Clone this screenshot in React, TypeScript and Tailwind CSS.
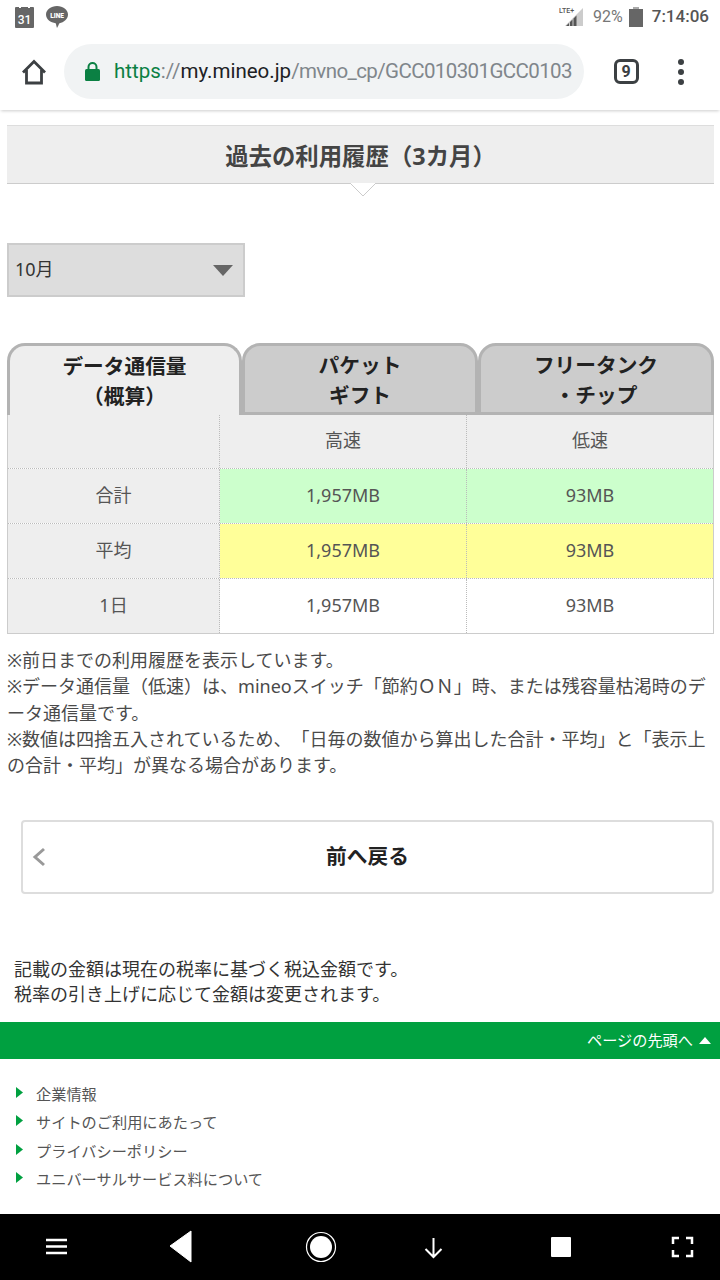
import React from 'react'

const JP = "font-['Noto_Sans','Noto_Sans_CJK_JP',sans-serif] [text-spacing-trim:space-all]";

const ROWS = [
    { label: "合計", high: "1,957MB", low: "93MB", bg: "bg-[#ccffcc]" },
    { label: "平均", high: "1,957MB", low: "93MB", bg: "bg-[#ffff99]" },
    { label: "1日", high: "1,957MB", low: "93MB", bg: "bg-white" },
];

const FOOTER_LINKS = ["企業情報", "サイトのご利用にあたって", "プライバシーポリシー", "ユニバーサルサービス料について"];

const StatusBar = () => (
    <div className="h-[34px] flex items-center justify-between pl-[15px] pr-[11px] bg-white">
        <div className="flex items-center gap-[12px]">
            {/* calendar */}
            <svg width="19" height="22" viewBox="0 0 19 22">
                <path d="M1 1h3v1h2V1h7v1h2V1h3a1 1 0 0 1 1 1v19a1 1 0 0 1-1 1H1a1 1 0 0 1-1-1V2a1 1 0 0 1 1-1z" fill="#666" />
                <text x="9.5" y="18" textAnchor="middle" fontSize="12" fontWeight="500" fill="#fff" fontFamily="Roboto">31</text>
            </svg>
            {/* line bubble */}
            <svg width="22" height="22" viewBox="0 0 22 22">
                <path d="M11 0c6 0 11 3.600 11 8.600 0 4.600-4.200 8-8.500 8.600-.6.6-1.600 3.500-2.500 4.800-.6-1.400-.8-3.800-1.300-4.800C4.600 16.800 0 13.200 0 8.600 0 3.600 5 0 11 0z" fill="#666" />
                <text x="11" y="11.500" textAnchor="middle" fontSize="6.500" fontWeight="900" fill="#fff" fontFamily="Roboto">LINE</text>
            </svg>
        </div>
        <div className="flex items-center font-['Roboto',sans-serif]">
            <svg width="26" height="24" viewBox="0 0 26 24" className="mr-[9px]">
                <path d="M7 21 L25 3 V21z" fill="#ccc" />
                <path d="M8 21 L11 18 V21zM12 21V17L14.500 14.500V21zM15.500 21V13.500L18.500 10.500V21z" fill="#555" />
                <text x="1" y="8" fontSize="7" fontWeight="500" fill="#555" fontFamily="Roboto">LTE+</text>
            </svg>
            <span className="text-[16px] text-[#777] mr-[6px]">92%</span>
            <svg width="14" height="20" viewBox="0 0 14 20" className="mr-[9px]">
                <path d="M4 0h6v2H4z" fill="#aaa" />
                <path d="M0 2h14v18H0z" fill="#666" />
            </svg>
            <span className="text-[17px] font-medium text-[#555]">7:14:06</span>
        </div>
    </div>
);

const Toolbar = () => (
    <div className="h-[76px] flex items-start pt-[10px] bg-white shadow-[0_2px_3px_-1px_rgba(0,0,0,0.2)] relative">
        <div className="w-[64px] h-[55px] flex items-center justify-center pl-[4px]">
            <svg width="26" height="26" viewBox="0 0 26 26" fill="none" stroke="#3c4043" strokeWidth="2.800">
                <path d="M2 13.500 13 2.500l11 11" />
                <path d="M5.500 11v13h15V11" />
            </svg>
        </div>
        <div className="w-[520px] h-[55px] rounded-full bg-[#f1f3f4] flex items-center pl-[21px] overflow-hidden">
            <svg width="15" height="20" viewBox="0 0 15 20" className="shrink-0 mr-[14px]">
                <path d="M3.500 8V5a4 4 0 0 1 8 0v3" fill="none" stroke="#0b8043" strokeWidth="2" />
                <rect x="0" y="7" width="15" height="12" rx="1.500" fill="#0b8043" />
            </svg>
            <div className="font-['Roboto',sans-serif] text-[20.500px] whitespace-nowrap">
                <span className="text-[#0b8043]">https</span>
                <span className="text-[#80868b]">://</span>
                <span className="text-[#202124]">my.mineo.jp</span>
                <span className="text-[#80868b] tracking-[-0.6px]">/mvno_cp/GCC010301GCC0103</span>
            </div>
        </div>
        <div className="w-[84px] h-[55px] flex items-center justify-center">
            <div className="w-[25px] h-[25px] border-[3px] border-[#3c4043] rounded-[6px] flex items-center justify-center text-[16px] font-bold text-[#3c4043] font-['Roboto',sans-serif]">9</div>
        </div>
        <div className="w-[6px] h-[55px] ml-[-3px] flex flex-col items-center justify-center gap-[4px] translate-x-[13px]">
            <div className="w-[6px] h-[6px] rounded-full bg-[#3c4043]" />
            <div className="w-[6px] h-[6px] rounded-full bg-[#3c4043]" />
            <div className="w-[6px] h-[6px] rounded-full bg-[#3c4043]" />
        </div>
    </div>
);

const Tab = ({ lines, active }: { lines: string[]; active?: boolean }) => (
    <div
        className={`h-[72px] border-[3px] rounded-t-[18px] border-[#b3b3b3] flex flex-col items-center justify-center text-[20.700px] leading-[30px] font-bold text-[#222] ${
            active ? 'bg-[#eeeeee] border-b-0 w-[235px]' : 'bg-[#cccccc] w-[236px] pt-[2px]'
        }`}
    >
        {lines.map((l) => (
            <span key={l}>{l}</span>
        ))}
    </div>
);

const UsageTable = () => (
    <div className="mx-[7px] w-[707px] border-x border-b border-[#ccc] text-[18px] text-[#555]">
        <div className="grid grid-cols-[212px_247px_1fr] h-[53px] bg-[#eeeeee] items-stretch">
            <div className="border-r border-dotted border-[#bbb]" />
            <div className="border-r border-dotted border-[#bbb] flex items-center justify-center pb-[2px]">高速</div>
            <div className="flex items-center justify-center pb-[2px]">低速</div>
        </div>
        {ROWS.map((row, i) => (
            <div key={row.label} className={`grid grid-cols-[212px_247px_1fr] h-[55px] border-t border-dotted border-[#bbb] ${i === 2 ? 'h-[54px]' : ''}`}>
                <div className="bg-[#eeeeee] border-r border-dotted border-[#bbb] flex items-center justify-center pb-[2px]">{row.label}</div>
                <div className={`${row.bg} border-r border-dotted border-[#bbb] flex items-center justify-center pb-[2px]`}>{row.high}</div>
                <div className={`${row.bg} flex items-center justify-center pb-[2px]`}>{row.low}</div>
            </div>
        ))}
    </div>
);

const NavBar = () => (
    <div className="h-[66px] bg-black flex items-center text-white relative">
        <svg width="720" height="66" viewBox="0 0 720 66">
            <path d="M46 26h21M46 32.500h21M46 39h21" stroke="#fff" strokeWidth="2.500" />
            <path d="M170 32 191 17 V 48z" fill="#fff" stroke="#fff" strokeWidth="1" strokeLinejoin="round" />
            <circle cx="321" cy="33" r="14.500" fill="none" stroke="#fff" strokeWidth="1.200" />
            <circle cx="321" cy="33" r="11" fill="#fff" />
            <path d="M433.500 24v19M425.500 35l8 8 8-8" fill="none" stroke="#fff" strokeWidth="2" />
            <rect x="551" y="23" width="20" height="20" rx="1" fill="#fff" />
            <path d="M673 30v-6h6M686 24h6v6M692 36v6h-6M679 42h-6v-6" fill="none" stroke="#fff" strokeWidth="2.500" />
        </svg>
    </div>
);

export default function App() {
    return (
        <div className={`w-[720px] h-[1280px] overflow-hidden flex flex-col bg-white ${JP}`}>
            <StatusBar />
            <Toolbar />

            <div className="flex-1">
                {/* heading */}
                <div className="mt-[15px] mx-[7px] w-[707px] h-[59px] bg-[#eeeeee] border-t border-t-[#ddd] border-b border-b-[#ccc] flex items-center justify-center pt-[5px] text-[23.400px] font-bold text-[#444] relative">
                    過去の利用履歴（3カ月）
                    <svg width="26" height="14" viewBox="0 0 26 14" className="absolute left-[343px] top-[57px]">
                        <path d="M0 0 13 13 26 0z" fill="#ffffff" />
                        <path d="M0 0 13 13 26 0" fill="none" stroke="#ccc" />
                    </svg>
                </div>

                {/* month select */}
                <div className="mt-[59px] ml-[7px] w-[238px] h-[54px] bg-[#dddddd] border-2 border-[#cccccc] flex items-center justify-between pl-[6px] pr-[10px] pb-[2px] text-[18px] text-[#333]">
                    10月
                    <svg width="20" height="11" viewBox="0 0 20 11" className="mt-[2px]">
                        <path d="M0 0h20L10 11z" fill="#666" />
                    </svg>
                </div>

                {/* tabs */}
                <div className="mt-[46px] ml-[7px] flex gap-0">
                    <Tab lines={["データ通信量", "（概算）"]} active />
                    <Tab lines={["パケット", "ギフト"]} />
                    <Tab lines={["フリータンク", "・チップ"]} />
                </div>

                <UsageTable />

                {/* notes */}
                <div className="mt-[13px] mx-[7px] text-[18px] leading-[26.250px] text-[#4a4a4a]">
                    <p>※前日までの利用履歴を表示しています。</p>
                    <p>※データ通信量（低速）は、mineoスイッチ「節約ＯＮ」時、または残容量枯渇時のデータ通信量です。</p>
                    <p>※数値は四捨五入されているため、「日毎の数値から算出した合計・平均」と「表示上の合計・平均」が異なる場合があります。</p>
                </div>

                {/* back button */}
                <div className="mt-[42px] ml-[21px] w-[693px] h-[74px] border-2 border-[#ddd] rounded-[4px] flex items-center justify-center pb-[2px] relative text-[20.700px] font-bold text-[#222]">
                    <svg width="14" height="20" viewBox="0 0 14 20" className="absolute left-[9px] top-[25px]">
                        <path d="M12 2 3 10l9 8" fill="none" stroke="#999" strokeWidth="3" />
                    </svg>
                    前へ戻る
                </div>

                {/* tax note */}
                <div className="mt-[63px] ml-[14px] text-[18px] leading-[25.200px] text-[#333]">
                    <p>記載の金額は現在の税率に基づく税込金額です。</p>
                    <p>税率の引き上げに応じて金額は変更されます。</p>
                </div>

                {/* back to top */}
                <div className="mt-[14.500px] h-[37px] bg-[#00a040] flex items-center justify-end pr-[9px] text-[15.200px] text-white">
                    ページの先頭へ
                    <svg width="12" height="7" viewBox="0 0 12 7" className="ml-[6px]">
                        <path d="M0 7h12L6 0z" fill="#fff" />
                    </svg>
                </div>

                {/* footer links */}
                <ul className="mt-[20.400px] ml-[16px] text-[15.200px] leading-[28.500px] text-[#555]">
                    {FOOTER_LINKS.map((link) => (
                        <li key={link} className="flex items-center">
                            <svg width="7" height="11" viewBox="0 0 7 11" className="mr-[13px] mt-[-3px]">
                                <path d="M0 0l7 5.500L0 11z" fill="#00a040" />
                            </svg>
                            {link}
                        </li>
                    ))}
                </ul>
            </div>

            <NavBar />
        </div>
    )
}
